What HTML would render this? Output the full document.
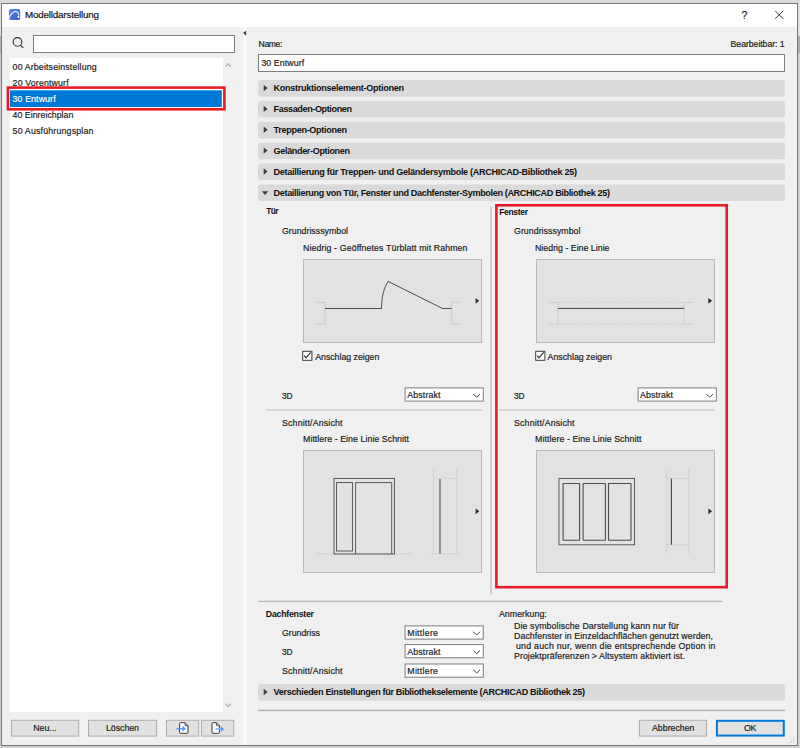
<!DOCTYPE html>
<html lang="de"><head><meta charset="utf-8"><title>Modelldarstellung</title>
<style>
html,body{margin:0;padding:0}
body{width:800px;height:748px;position:relative;overflow:hidden;background:#d2d2d2;font-family:"Liberation Sans",sans-serif}
div{position:absolute;box-sizing:border-box}
.t{-webkit-text-stroke:0.18px currentColor;position:absolute;white-space:pre;font-family:"Liberation Sans",sans-serif;font-weight:normal}
.t.b{font-weight:bold;-webkit-text-stroke:0}
#top{left:0;top:0;width:800px;height:4px;background:#dcdcdc}
#lshade{left:0;top:4px;width:2px;height:744px;background:linear-gradient(#e2e2e2 0,#e2e2e2 31.5px,#b0b0b0 32.5px,#b0b0b0 48.5px,#cfcfcf 49.5px)}
#rshade{left:798px;top:4px;width:2px;height:744px;background:linear-gradient(#e2e2e2 0,#e2e2e2 31.5px,#acacac 32.5px,#acacac 48.5px,#cfcfcf 49.5px)}
#win{left:1px;top:3px;width:797px;height:743px;background:#f0f0f0;border:1px solid #787878}
#title{left:2px;top:4px;width:795px;height:23px;background:#fff}
#split{left:243px;top:27px;width:4px;height:718px;background:#f8f8f8}
.inp{background:#fff;border:1px solid #7e7e7e}
#list{left:10px;top:58px;width:213px;height:654px;background:#fff}
.prev{background:#e2e2e2;border:1px solid #b9b9b9}
svg{position:absolute;left:0;top:0}

</style></head>
<body>
<div id="top"></div>
<div id="lshade"></div>
<div id="rshade"></div>
<div id="win"></div>
<div id="title"></div>
<div id="split"></div>
<!-- left pane -->
<div class="inp" style="left:33px;top:35px;width:202px;height:18px"></div>
<div id="list"></div>

<!-- right pane -->
<div class="inp" style="left:258px;top:54px;width:527px;height:18px"></div>
<!-- previews -->
<div class="prev" style="left:303px;top:259px;width:179px;height:84px"></div>
<div class="prev" style="left:536px;top:259px;width:179px;height:84px"></div>
<div class="prev" style="left:303px;top:450px;width:179px;height:123px"></div>
<div class="prev" style="left:536px;top:450px;width:179px;height:123px"></div>
<!-- checkboxes -->
<!-- dropdowns -->
<!-- separators -->
<!-- red highlight -->

<!-- bottom buttons -->
<svg width="800" height="748" viewBox="0 0 800 748" fill="none">
<rect x="10" y="90.3" width="211.8" height="16.7" fill="#0078d7"/>
<!-- section headers -->
<g fill="#dadada">
<rect x="258" y="80.1" width="527" height="16.6" rx="2.6"/>
<rect x="258" y="100.95" width="527" height="16.6" rx="2.6"/>
<rect x="258" y="121.8" width="527" height="16.6" rx="2.6"/>
<rect x="258" y="142.65" width="527" height="16.6" rx="2.6"/>
<rect x="258" y="163.5" width="527" height="16.6" rx="2.6"/>
<rect x="258" y="184.4" width="527" height="16.6" rx="2.6"/>
<rect x="258" y="684.1" width="527" height="16.6" rx="2.6"/>
</g>
<!-- buttons -->
<g fill="#e1e1e1" stroke="#adadad" stroke-width="1">
<rect x="11.5" y="720.3" width="67.2" height="15.8"/>
<rect x="88.5" y="720.3" width="68.1" height="15.8"/>
<rect x="166.4" y="720.3" width="32.3" height="15.8"/>
<rect x="201.5" y="720.3" width="32.2" height="15.8"/>
<rect x="639.5" y="720.3" width="67" height="15.8"/>
</g>
<rect x="716.9" y="720.8" width="66.9" height="14.8" fill="#e1e1e1" stroke="#0078d7" stroke-width="2"/>
<!-- dropdowns -->
<g fill="#fff" stroke="#7c7c7c" stroke-width="1">
<rect x="405.1" y="387.9" width="78.2" height="13.2"/>
<rect x="638.1" y="387.9" width="78.2" height="13.2"/>
<rect x="405.1" y="625.9" width="78.2" height="13.2"/>
<rect x="405.1" y="644.6" width="78.2" height="13.2"/>
<rect x="405.1" y="664" width="78.2" height="13.2"/>
</g>
<!-- separators -->
<g fill="#cacaca">
<rect x="266" y="409.3" width="216" height="1.4"/>
<rect x="499" y="409.3" width="216" height="1.4"/>
</g>
<rect x="258.1" y="600.7" width="464.2" height="1.35" fill="#b6b6b6"/>
<rect x="258.1" y="709.75" width="527" height="1.35" fill="#ababab"/>
<rect x="490.35" y="206.5" width="1.4" height="388.5" fill="#c2c2c2"/>
<!-- app icon -->
<defs><linearGradient id="ig" x1="0" y1="0" x2="1" y2="1"><stop offset="0" stop-color="#5f8ff0"/><stop offset="1" stop-color="#2f57c0"/></linearGradient></defs>
<rect x="9" y="9" width="11.2" height="11" rx="2" fill="url(#ig)"/>
<path d="M8.5 18.9 C10.4 14.6 12.8 11.4 15.7 11.4 C17.6 11.4 18.7 12.9 18.8 15.6" stroke="#fff" stroke-width="1.05"/>
<rect x="17.6" y="15.8" width="1.7" height="2.2" fill="#fff"/>
<!-- title buttons -->
<path d="M775.2 10.8 L783.2 18.8 M783.2 10.8 L775.2 18.8" stroke="#222" stroke-width="0.9"/>
<!-- search icon -->
<circle cx="17.5" cy="41.9" r="4.3" stroke="#333" stroke-width="1.15"/>
<path d="M20.5 45.1 L23.3 47.9" stroke="#333" stroke-width="1.25"/>
<!-- splitter arrow -->
<path d="M243 33 L246.2 30.4 L246.2 35.8 Z" fill="#444"/>
<!-- list scroll arrows -->
<path d="M225.6 66.6 L228.2 63.8 L230.8 66.6" stroke="#b0b0b0" stroke-width="1.3"/>
<path d="M225.6 703.8 L228.2 706.6 L230.8 703.8" stroke="#b0b0b0" stroke-width="1.3"/>
<!-- header triangles -->
<g fill="#3c3c3c">
<path d="M263.7 84.9 L267.6 88.1 L263.7 91.3 Z"/>
<path d="M263.7 105.7 L267.6 108.9 L263.7 112.1 Z"/>
<path d="M263.7 126.6 L267.6 129.8 L263.7 133.0 Z"/>
<path d="M263.7 147.4 L267.6 150.6 L263.7 153.8 Z"/>
<path d="M263.7 168.3 L267.6 171.5 L263.7 174.7 Z"/>
<path d="M263.7 688.8 L267.6 692.0 L263.7 695.2 Z"/>
<path d="M261.8 191.2 L268.2 191.2 L265 194.9 Z"/>
</g>
<!-- preview arrows -->
<g fill="#2a2a2a">
<path d="M475.6 297.9 L479.2 300.8 L475.6 303.7 Z"/>
<path d="M708.4 297.9 L712.0 300.8 L708.4 303.7 Z"/>
<path d="M475.6 508.4 L479.2 511.3 L475.6 514.2 Z"/>
<path d="M708.4 508.4 L712.0 511.3 L708.4 514.2 Z"/>
</g>
<!-- door plan -->
<g stroke="#c4c4c4" stroke-width="0.7">
<path d="M315.4 302.3 H325 V324.3 H315.4"/>
<path d="M460.7 302.3 H451.7 V324.3 H460.7"/>
</g>
<path d="M325 308.5 H381.5 C381.7 296.5 383.8 288 388.1 281.4 L442.6 308.5 H451.7" stroke="#3a3f42" stroke-width="0.9"/>
<!-- window plan -->
<g stroke="#c9c9c9" stroke-width="0.7" stroke-dasharray="2.9 2.15">
<path d="M558.6 302.3 H684.2"/>
<path d="M558.6 324.3 H684.2"/>
</g>
<g stroke="#c6c6c6" stroke-width="0.7">
<path d="M548.4 302.3 H557.8 V324.3 H548.4"/>
<path d="M693.7 302.3 H684.2 V324.3 H693.7"/>
</g>
<path d="M557.8 308.4 H684.2" stroke="#3a3f42" stroke-width="0.95"/>
<!-- checkboxes -->
<g fill="#fff" stroke="#3c3c3c" stroke-width="1">
<rect x="302.7" y="351.3" width="9.2" height="9"/>
<rect x="535.7" y="351.3" width="9.2" height="9"/>
</g>
<g stroke="#2c2c2c" stroke-width="1.15">
<path d="M304.2 355.6 L306 357.9 L310.7 352.4"/>
<path d="M537.2 355.6 L539 357.9 L543.7 352.4"/>
</g>
<!-- dropdown chevrons -->
<g stroke="#4a4a4a" stroke-width="1">
<path d="M473.4 394.0 L476.7 397.3 L480.0 394.0"/>
<path d="M706.4 394.0 L709.7 397.3 L713.0 394.0"/>
<path d="M473.4 631.7 L476.7 635.0 L480.0 631.7"/>
<path d="M473.4 650.5 L476.7 653.8 L480.0 650.5"/>
<path d="M473.4 669.8 L476.7 673.1 L480.0 669.8"/>
</g>
<!-- door elevation -->
<g stroke="#cdcdcd" stroke-width="0.7">
<path d="M316 553.8 H412"/><path d="M430 553.8 H460"/>
<path d="M433.4 469 V553.8"/><path d="M456.6 469 V553.8"/><path d="M433.4 478.5 H456.6"/>
</g>
<g stroke="#3f4447" stroke-width="0.85">
<rect x="334" y="478.4" width="60.4" height="75.6"/>
<rect x="336.6" y="482.6" width="15.8" height="68.4"/>
<path d="M355.6 554 V482.6 H391.7 V554"/>
</g>
<path d="M440 479 V554" stroke="#4a4f52" stroke-width="1.1"/>
<!-- window elevation -->
<rect x="559" y="478.4" width="75.6" height="66.4" stroke="#3f4447" stroke-width="0.85"/>
<g stroke="#4a4f52" stroke-width="1.1">
<rect x="563.1" y="483.5" width="16.5" height="56.8" rx="0.5"/>
<rect x="583.1" y="483.5" width="22.3" height="56.8" rx="0.5"/>
<rect x="608.5" y="483.5" width="22.5" height="56.8" rx="0.5"/>
</g>
<g stroke="#cdcdcd" stroke-width="0.7">
<path d="M666.6 469 V554"/><path d="M688.6 469 V554"/><path d="M666.6 478.5 H688.6"/><path d="M666.6 544.8 H688.6"/>
</g>
<path d="M671.4 478.4 V544.8" stroke="#4a4f52" stroke-width="1.2"/>
<!-- icon buttons -->
<g>
<path d="M179.6 723.4 Q179.6 722.7 180.3 722.7 H185 L188 725.7 V732.6 Q188 733.3 187.3 733.3 H180.3 Q179.6 733.3 179.6 732.6 Z" fill="#fff" stroke="#3a3a3a" stroke-width="1"/>
<path d="M185 722.7 V725.7 H188" stroke="#3a3a3a" stroke-width="0.8"/>
<path d="M176.5 728.8 H184.6 M182.4 726.5 L184.8 728.8 L182.4 731.1" stroke="#3b8cff" stroke-width="1.15"/>
<path d="M212 723.4 Q212 722.7 212.7 722.7 H216.4 L219.4 725.7 V732.6 Q219.4 733.3 218.7 733.3 H212.7 Q212 733.3 212 732.6 Z" fill="#fff" stroke="#3a3a3a" stroke-width="1"/>
<path d="M216.4 722.7 V725.7 H219.4" stroke="#3a3a3a" stroke-width="0.8"/>
<path d="M215.6 729 H221.4" stroke="#7db4ff" stroke-width="1.7"/>
<path d="M220.9 726.3 L224.2 729 L220.9 731.7 Z" fill="#4d9bff"/>
</g>
<!-- red highlights -->
<g stroke="#ea1a24" stroke-width="2.6">
<rect x="7.9" y="87.6" width="216.5" height="21.7"/>
<rect x="496.4" y="205.3" width="230.3" height="381.9"/>
</g>
<!-- resize grip -->
<g fill="#bdbdbd">
<rect x="793.4" y="737.6" width="1" height="1"/><rect x="791.2" y="739.8" width="1" height="1"/><rect x="793.4" y="739.8" width="1" height="1"/>
<rect x="789" y="742" width="1" height="1"/><rect x="791.2" y="742" width="1" height="1"/><rect x="793.4" y="742" width="1" height="1"/>
</g>
</svg>
<span class="t" style="left:741.6px;top:9px;font-size:10.5px;line-height:13px;color:#222">?</span>

<span class="t" style="left:25.0px;top:8.44px;font-size:9.8px;line-height:13.72px;letter-spacing:-0.175px;color:#111">Modelldarstellung</span>
<span class="t" style="left:12.6px;top:60.89px;font-size:8.8px;line-height:12.32px;letter-spacing:0.141px;color:#1a1a1a">00 Arbeitseinstellung</span>
<span class="t" style="left:12.6px;top:76.99px;font-size:8.8px;line-height:12.32px;letter-spacing:0.143px;color:#1a1a1a">20 Vorentwurf</span>
<span class="t" style="left:12.6px;top:93.09px;font-size:8.8px;line-height:12.32px;letter-spacing:0.104px;color:#fff">30 Entwurf</span>
<span class="t" style="left:12.6px;top:109.19px;font-size:8.8px;line-height:12.32px;letter-spacing:0.010px;color:#1a1a1a">40 Einreichplan</span>
<span class="t" style="left:12.6px;top:125.29px;font-size:8.8px;line-height:12.32px;letter-spacing:0.178px;color:#1a1a1a">50 Ausführungsplan</span>
<span class="t" style="left:33.3px;top:722.39px;font-size:8.8px;line-height:12.32px;letter-spacing:-0.057px;color:#1a1a1a">Neu...</span>
<span class="t" style="left:106.0px;top:722.39px;font-size:8.8px;line-height:12.32px;letter-spacing:-0.044px;color:#1a1a1a">Löschen</span>
<span class="t" style="left:258.6px;top:38.00px;font-size:8.6px;line-height:12.04px;letter-spacing:-0.378px;color:#1a1a1a">Name:</span>
<span class="t" style="left:730.6px;top:37.79px;font-size:8.8px;line-height:12.32px;letter-spacing:-0.097px;color:#1a1a1a">Bearbeitbar: 1</span>
<span class="t" style="left:261.4px;top:56.79px;font-size:8.8px;line-height:12.32px;letter-spacing:0.082px;color:#1a1a1a">30 Entwurf</span>
<span class="t b" style="left:273.6px;top:82.28px;font-size:9.1px;line-height:12.74px;letter-spacing:-0.305px;color:#111">Konstruktionselement-Optionen</span>
<span class="t b" style="left:273.6px;top:103.13px;font-size:9.1px;line-height:12.74px;letter-spacing:-0.406px;color:#111">Fassaden-Optionen</span>
<span class="t b" style="left:273.6px;top:123.98px;font-size:9.1px;line-height:12.74px;letter-spacing:-0.328px;color:#111">Treppen-Optionen</span>
<span class="t b" style="left:273.6px;top:144.83px;font-size:9.1px;line-height:12.74px;letter-spacing:-0.372px;color:#111">Geländer-Optionen</span>
<span class="t b" style="left:273.6px;top:165.68px;font-size:9.1px;line-height:12.74px;letter-spacing:-0.314px;color:#111">Detaillierung für Treppen- und Geländersymbole (ARCHICAD-Bibliothek 25)</span>
<span class="t b" style="left:273.6px;top:186.58px;font-size:9.1px;line-height:12.74px;letter-spacing:-0.366px;color:#111">Detaillierung von Tür, Fenster und Dachfenster-Symbolen (ARCHICAD Bibliothek 25)</span>
<span class="t b" style="left:273.6px;top:686.28px;font-size:9.1px;line-height:12.74px;letter-spacing:-0.358px;color:#111">Verschieden Einstellungen für Bibliothekselemente (ARCHICAD Bibliothek 25)</span>
<span class="t b" style="left:266.2px;top:206.21px;font-size:8.4px;line-height:11.76px;letter-spacing:-0.600px;color:#111">Tür</span>
<span class="t" style="left:282.0px;top:225.39px;font-size:8.8px;line-height:12.32px;letter-spacing:0.000px;color:#1a1a1a">Grundrisssymbol</span>
<span class="t" style="left:303.0px;top:241.69px;font-size:8.8px;line-height:12.32px;letter-spacing:0.101px;color:#1a1a1a">Niedrig - Geöffnetes Türblatt mit Rahmen</span>
<span class="t" style="left:315.2px;top:350.59px;font-size:8.8px;line-height:12.32px;letter-spacing:-0.033px;color:#1a1a1a">Anschlag zeigen</span>
<span class="t" style="left:282.0px;top:390.51px;font-size:8.4px;line-height:11.76px;letter-spacing:-0.219px;color:#1a1a1a">3D</span>
<span class="t" style="left:407.3px;top:389.09px;font-size:8.8px;line-height:12.32px;letter-spacing:0.131px;color:#1a1a1a">Abstrakt</span>
<span class="t" style="left:282.0px;top:416.89px;font-size:8.8px;line-height:12.32px;letter-spacing:0.165px;color:#1a1a1a">Schnitt/Ansicht</span>
<span class="t" style="left:303.0px;top:433.09px;font-size:8.8px;line-height:12.32px;letter-spacing:0.049px;color:#1a1a1a">Mittlere - Eine Linie Schnitt</span>
<span class="t b" style="left:499.2px;top:206.00px;font-size:8.6px;line-height:12.04px;letter-spacing:-0.374px;color:#111">Fenster</span>
<span class="t" style="left:514.0px;top:225.39px;font-size:8.8px;line-height:12.32px;letter-spacing:0.036px;color:#1a1a1a">Grundrisssymbol</span>
<span class="t" style="left:535.0px;top:241.69px;font-size:8.8px;line-height:12.32px;letter-spacing:0.009px;color:#1a1a1a">Niedrig - Eine Linie</span>
<span class="t" style="left:547.6px;top:350.59px;font-size:8.8px;line-height:12.32px;letter-spacing:-0.012px;color:#1a1a1a">Anschlag zeigen</span>
<span class="t" style="left:514.0px;top:390.51px;font-size:8.4px;line-height:11.76px;letter-spacing:-0.219px;color:#1a1a1a">3D</span>
<span class="t" style="left:640.0px;top:389.09px;font-size:8.8px;line-height:12.32px;letter-spacing:0.103px;color:#1a1a1a">Abstrakt</span>
<span class="t" style="left:514.0px;top:416.89px;font-size:8.8px;line-height:12.32px;letter-spacing:0.165px;color:#1a1a1a">Schnitt/Ansicht</span>
<span class="t" style="left:535.0px;top:433.09px;font-size:8.8px;line-height:12.32px;letter-spacing:0.066px;color:#1a1a1a">Mittlere - Eine Linie Schnitt</span>
<span class="t b" style="left:265.8px;top:607.79px;font-size:8.8px;line-height:12.32px;letter-spacing:-0.266px;color:#111">Dachfenster</span>
<span class="t" style="left:282.0px;top:627.39px;font-size:8.8px;line-height:12.32px;letter-spacing:-0.018px;color:#1a1a1a">Grundriss</span>
<span class="t" style="left:282.0px;top:647.21px;font-size:8.4px;line-height:11.76px;letter-spacing:-0.219px;color:#1a1a1a">3D</span>
<span class="t" style="left:282.0px;top:665.49px;font-size:8.8px;line-height:12.32px;letter-spacing:0.165px;color:#1a1a1a">Schnitt/Ansicht</span>
<span class="t" style="left:407.3px;top:626.99px;font-size:8.8px;line-height:12.32px;letter-spacing:0.265px;color:#1a1a1a">Mittlere</span>
<span class="t" style="left:407.3px;top:646.19px;font-size:8.8px;line-height:12.32px;letter-spacing:0.131px;color:#1a1a1a">Abstrakt</span>
<span class="t" style="left:407.3px;top:665.39px;font-size:8.8px;line-height:12.32px;letter-spacing:0.265px;color:#1a1a1a">Mittlere</span>
<span class="t" style="left:498.9px;top:607.89px;font-size:8.8px;line-height:12.32px;letter-spacing:0.051px;color:#1a1a1a">Anmerkung:</span>
<span class="t" style="left:514.0px;top:619.89px;font-size:8.8px;line-height:12.32px;letter-spacing:0.119px;color:#1a1a1a">Die symbolische Darstellung kann nur für</span>
<span class="t" style="left:514.0px;top:629.79px;font-size:8.8px;line-height:12.32px;letter-spacing:0.072px;color:#1a1a1a">Dachfenster in Einzeldachflächen genutzt werden,</span>
<span class="t" style="left:516.0px;top:639.79px;font-size:8.8px;line-height:12.32px;letter-spacing:0.227px;color:#1a1a1a">und auch nur, wenn die entsprechende Option in</span>
<span class="t" style="left:514.0px;top:649.69px;font-size:8.8px;line-height:12.32px;letter-spacing:0.058px;color:#1a1a1a">Projektpräferenzen &gt; Altsystem aktiviert ist.</span>
<span class="t" style="left:652.0px;top:722.39px;font-size:8.8px;line-height:12.32px;letter-spacing:-0.008px;color:#1a1a1a">Abbrechen</span>
<span class="t" style="left:744.0px;top:722.39px;font-size:8.8px;line-height:12.32px;letter-spacing:-0.219px;color:#1a1a1a">OK</span>
</body></html>
